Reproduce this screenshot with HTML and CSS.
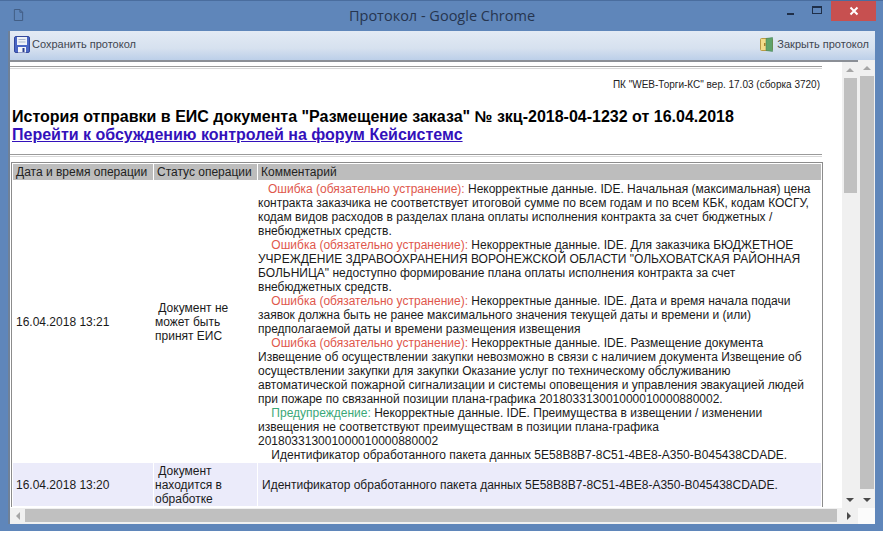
FILE: index.html
```html
<!DOCTYPE html>
<html lang="ru">
<head>
  <meta charset="UTF-8">
  <title>Протокол - Google Chrome</title>
  <link rel="stylesheet" href="styles.css">
</head>
<body>
  <div class="window">
    <div class="titlebar">
      <svg class="doc-icon" width="11" height="14" viewBox="0 0 12 15"><path d="M1.5 1.5h6l3 3v9h-9z M7.5 1.5v3h3" fill="none" stroke="#3f5a80" stroke-width="1"/></svg>
      <div class="title">Протокол - Google Chrome</div>
      <div class="win-btn btn-min"><span></span></div>
      <div class="win-btn btn-max"><span></span></div>
      <div class="win-btn btn-close">
        <svg width="10" height="10" viewBox="0 0 10 10"><path d="M1.5 1.5l7 7M8.5 1.5l-7 7" stroke="#fff" stroke-width="2"/></svg>
      </div>
    </div>

    <div class="toolbar">
      <div class="tool">
        <svg width="16" height="17" viewBox="0 0 16 17">
          <rect x="0.5" y="0.5" width="15" height="16" rx="1.5" fill="#4a66c4" stroke="#34499c"/>
          <rect x="3" y="1" width="10" height="8" fill="#eef2f8"/>
          <path d="M4.5 3.5h7M4.5 6h7" stroke="#a9b6cc" stroke-width="1"/>
          <rect x="4" y="11" width="8" height="5.5" fill="#f4f6fa"/>
          <rect x="8.5" y="12" width="2" height="4" fill="#2b3f8c"/>
        </svg>
        <span>Сохранить протокол</span>
      </div>
      <div class="tool">
        <svg width="13" height="15" viewBox="0 0 13 15">
          <rect x="0.5" y="1.5" width="12" height="12" rx="1" fill="#f3dc8a" stroke="#b99a45"/>
          <path d="M6 1.5l6.5-1v14l-6.5-1z" fill="#5fa36a" stroke="#3f7f55" stroke-width="0.5"/>
          <rect x="4" y="6" width="1.5" height="3" fill="#a47f2c"/>
        </svg>
        <span>Закрыть протокол</span>
      </div>
    </div>

    <div class="client">
      <div class="left-col">
        <div class="page-row">
          <div class="page">
            <hr class="rule">
            <div class="version">ПК "WEB-Торги-КС" вер. 17.03 (сборка 3720)</div>
            <div class="doc-title">История отправки в ЕИС документа "Размещение заказа" № зкц-2018-04-1232 от 16.04.2018</div>
            <a class="forum-link" href="#">Перейти к обсуждению контролей на форум Кейсистемс</a>
            <hr class="rule rule-low">
            <table class="log">
              <tr>
                <th class="col-date">Дата и время операции</th>
                <th class="col-status">Статус операции</th>
                <th>Комментарий</th>
              </tr>
              <tr class="main-row">
                <td>16.04.2018 13:21</td>
                <td>&nbsp;Документ не может быть принят ЕИС</td>
                <td>
                  &nbsp;&nbsp;&nbsp;<span class="err">Ошибка (обязательно устранение):</span> Некорректные данные. IDE. Начальная (максимальная) цена контракта заказчика не соответствует итоговой сумме по всем годам и по всем КБК, кодам КОСГУ, кодам видов расходов в разделах плана оплаты исполнения контракта за счет бюджетных / внебюджетных средств.<br>
                  &nbsp;&nbsp;&nbsp;&nbsp;<span class="err">Ошибка (обязательно устранение):</span> Некорректные данные. IDE. Для заказчика БЮДЖЕТНОЕ УЧРЕЖДЕНИЕ ЗДРАВООХРАНЕНИЯ ВОРОНЕЖСКОЙ ОБЛАСТИ "ОЛЬХОВАТСКАЯ РАЙОННАЯ БОЛЬНИЦА" недоступно формирование плана оплаты исполнения контракта за счет внебюджетных средств.<br>
                  &nbsp;&nbsp;&nbsp;&nbsp;<span class="err">Ошибка (обязательно устранение):</span> Некорректные данные. IDE. Дата и время начала подачи заявок должна быть не ранее максимального значения текущей даты и времени и (или) предполагаемой даты и времени размещения извещения<br>
                  &nbsp;&nbsp;&nbsp;&nbsp;<span class="err">Ошибка (обязательно устранение):</span> Некорректные данные. IDE. Размещение документа Извещение об осуществлении закупки невозможно в связи с наличием документа Извещение об осуществлении закупки для закупки Оказание услуг по техническому обслуживанию автоматической пожарной сигнализации и системы оповещения и управления эвакуацией людей при пожаре по связанной позиции плана-графика 201803313001000010000880002.<br>
                  &nbsp;&nbsp;&nbsp;&nbsp;<span class="warn">Предупреждение:</span> Некорректные данные. IDE. Преимущества в извещении / изменении извещения не соответствуют преимуществам в позиции плана-графика 201803313001000010000880002<br>
                  &nbsp;&nbsp;&nbsp;&nbsp;Идентификатор обработанного пакета данных 5E58B8B7-8C51-4BE8-A350-B045438CDADE.
                </td>
              </tr>
              <tr class="alt">
                <td>16.04.2018 13:20</td>
                <td>&nbsp;Документ находится в обработке</td>
                <td>Идентификатор обработанного пакета данных 5E58B8B7-8C51-4BE8-A350-B045438CDADE.</td>
              </tr>
            </table>
          </div>
          <div class="vscroll">
            <div class="sb-btn"><i class="arrow-up"></i></div>
            <div class="thumb thumb-inner"></div>
            <div class="sb-fill"></div>
            <div class="sb-btn"><i class="arrow-down"></i></div>
          </div>
        </div>
        <div class="hscroll">
          <div class="hs-btn"><i class="arrow-left"></i></div>
          <div class="hthumb"></div>
          <div class="hs-btn hs-right"><i class="arrow-right"></i></div>
        </div>
      </div>
      <div class="right-col">
        <div class="vscroll vscroll-outer">
          <div class="sb-btn"><i class="arrow-up"></i></div>
          <div class="thumb thumb-outer"></div>
          <div class="sb-btn"><i class="arrow-down"></i></div>
        </div>
        <div class="corner"></div>
      </div>
    </div>
  </div>
</body>
</html>
```

FILE: styles.css
```css
html, body {
  margin: 0;
  padding: 0;
  height: 100%;
  overflow: hidden;
  background: #fff;
  font-family: "Liberation Sans", Arial, sans-serif;
}

.window {
  width: 883px;
  height: 531px;
  box-sizing: border-box;
  padding: 0 8px 7px 8px;
  display: flex;
  flex-direction: column;
  background: #5f86ba;
  border-top: 1px solid #4a6d9e;
}

/* Title bar */
.titlebar {
  height: 30px;
  flex: none;
  display: flex;
  align-items: flex-start;
}

.doc-icon {
  margin: 7px 0 0 5px;
}

.title {
  flex: 1;
  text-align: center;
  margin-left: 82px;
  padding-top: 5px;
  font-family: "Open Sans", sans-serif;
  font-size: 14.5px;
  line-height: 20px;
  color: #26354f;
}

.win-btn {
  display: flex;
  align-items: center;
  justify-content: center;
  height: 20px;
}

.btn-min {
  width: 25px;
}

.btn-min span {
  display: block;
  width: 7px;
  height: 2px;
  margin-top: 5px;
  background: #1f2f49;
}

.btn-max {
  width: 28px;
}

.btn-max span {
  display: block;
  width: 8px;
  height: 5px;
  border: 1px solid #1f2f49;
  border-top-width: 2px;
  margin-top: -3px;
}

.btn-close {
  width: 45px;
  margin-right: -1px;
  background: #c75050;
}

/* Toolbar */
.toolbar {
  height: 29px;
  flex: none;
  box-sizing: border-box;
  display: flex;
  justify-content: space-between;
  align-items: center;
  padding: 0 6px 3px 4px;
  background: linear-gradient(#e3eaf4, #d6e1ef 60%, #bccfe9);
  border-left: 2px solid #6f8198;
  font-size: 11px;
  color: #3f4650;
}

.tool {
  display: flex;
  align-items: center;
  gap: 2px;
}

.tool + .tool {
  gap: 4px;
}

/* Client area */
.client {
  flex: 1;
  min-height: 0;
  display: flex;
  border-left: 2px solid #6f8198;
}

.left-col {
  flex: 1;
  min-width: 0;
  display: flex;
  flex-direction: column;
}

.page-row {
  flex: 1;
  min-height: 0;
  display: flex;
  border-top: 2px solid #8b8f96;
  background: #fff;
}

.page {
  flex: 1;
  min-width: 0;
  overflow: hidden;
  box-sizing: border-box;
  padding: 4px 20px 0 0;
  background: #fff;
}

.rule {
  margin: 0;
  height: 1px;
  border: 0;
  border-top: 1px solid #9a9a9a;
  border-bottom: 1px solid #d8d8d8;
}

.version {
  margin-top: 9px;
  padding-right: 2px;
  text-align: right;
  font-size: 10px;
  line-height: 13px;
  color: #222;
}

.doc-title {
  margin: 17px 0 0 2px;
  font-size: 16px;
  font-weight: bold;
  line-height: 18px;
  color: #000;
  white-space: nowrap;
}

.forum-link {
  display: block;
  margin-left: 2px;
  font-size: 16px;
  font-weight: bold;
  line-height: 18px;
  color: #3311bb;
}

.rule-low {
  margin-top: 10px;
}

/* Log table */
.log {
  width: 812px;
  margin: 5px 0 0 1px;
  border: 1px solid #8c8c8c;
  border-bottom: 0;
  border-spacing: 1px;
  font-size: 12px;
  line-height: 14px;
  color: #1a1a1a;
  table-layout: fixed;
}

.log th {
  padding: 1px 3px;
  height: 14px;
  text-align: left;
  font-weight: normal;
  color: #222;
  background: #bdbdbd;
}

.col-date {
  width: 134px;
}

.col-status {
  width: 97px;
}

.log td {
  padding: 0 3px;
  vertical-align: middle;
}

.log td:first-child {
  padding-left: 3px;
}

.log td:nth-child(2) {
  padding-left: 1px;
  padding-right: 12px;
}

.log td:nth-child(3) {
  padding-left: 0;
  padding-right: 1px;
}

.log .main-row td {
  padding-top: 1px;
}

.alt td {
  height: 43px;
  background: #ebebfa;
}

.log .alt td:nth-child(3) {
  padding-left: 4px;
}

.err {
  color: #e0574c;
}

.warn {
  color: #3aa878;
}

/* Scroll bars */
.vscroll {
  width: 16px;
  flex: none;
  display: flex;
  flex-direction: column;
  background: #f0f0f0;
}

.vscroll-outer {
  flex: 1;
  width: auto;
}

.right-col {
  width: 17px;
  flex: none;
  display: flex;
  flex-direction: column;
}

.corner {
  height: 16px;
  flex: none;
  background: #fbfbfb;
}

.sb-btn {
  height: 16px;
  flex: none;
  display: flex;
  align-items: center;
  justify-content: center;
}

.thumb {
  margin: 0 1px 0 2px;
  background: #c0c0c0;
}

.thumb-inner {
  height: 115px;
  flex: none;
}

.thumb-outer {
  flex: 1;
  margin-bottom: 3px;
}

.sb-fill {
  flex: 1;
}

.hscroll {
  height: 16px;
  flex: none;
  display: flex;
  background: #f0f0f0;
}

.hs-btn {
  width: 15px;
  flex: none;
  display: flex;
  align-items: center;
  justify-content: center;
}

.hthumb {
  width: 812px;
  flex: none;
  margin: 1px 0 2px;
  background: #c0c0c0;
}

.hs-right {
  margin-left: auto;
  width: 18px;
}

.arrow-up, .arrow-down, .arrow-left, .arrow-right {
  display: block;
  width: 0;
  height: 0;
  border-style: solid;
  border-color: transparent;
}

.arrow-up {
  border-width: 0 4px 4px;
  border-bottom-color: #a6a6a6;
}

.arrow-down {
  border-width: 4px 4px 0;
  border-top-color: #4a4a4a;
}

.arrow-left {
  border-width: 4px 4px 4px 0;
  border-right-color: #a6a6a6;
}

.arrow-right {
  border-width: 4px 0 4px 4px;
  border-left-color: #4a4a4a;
}
```
